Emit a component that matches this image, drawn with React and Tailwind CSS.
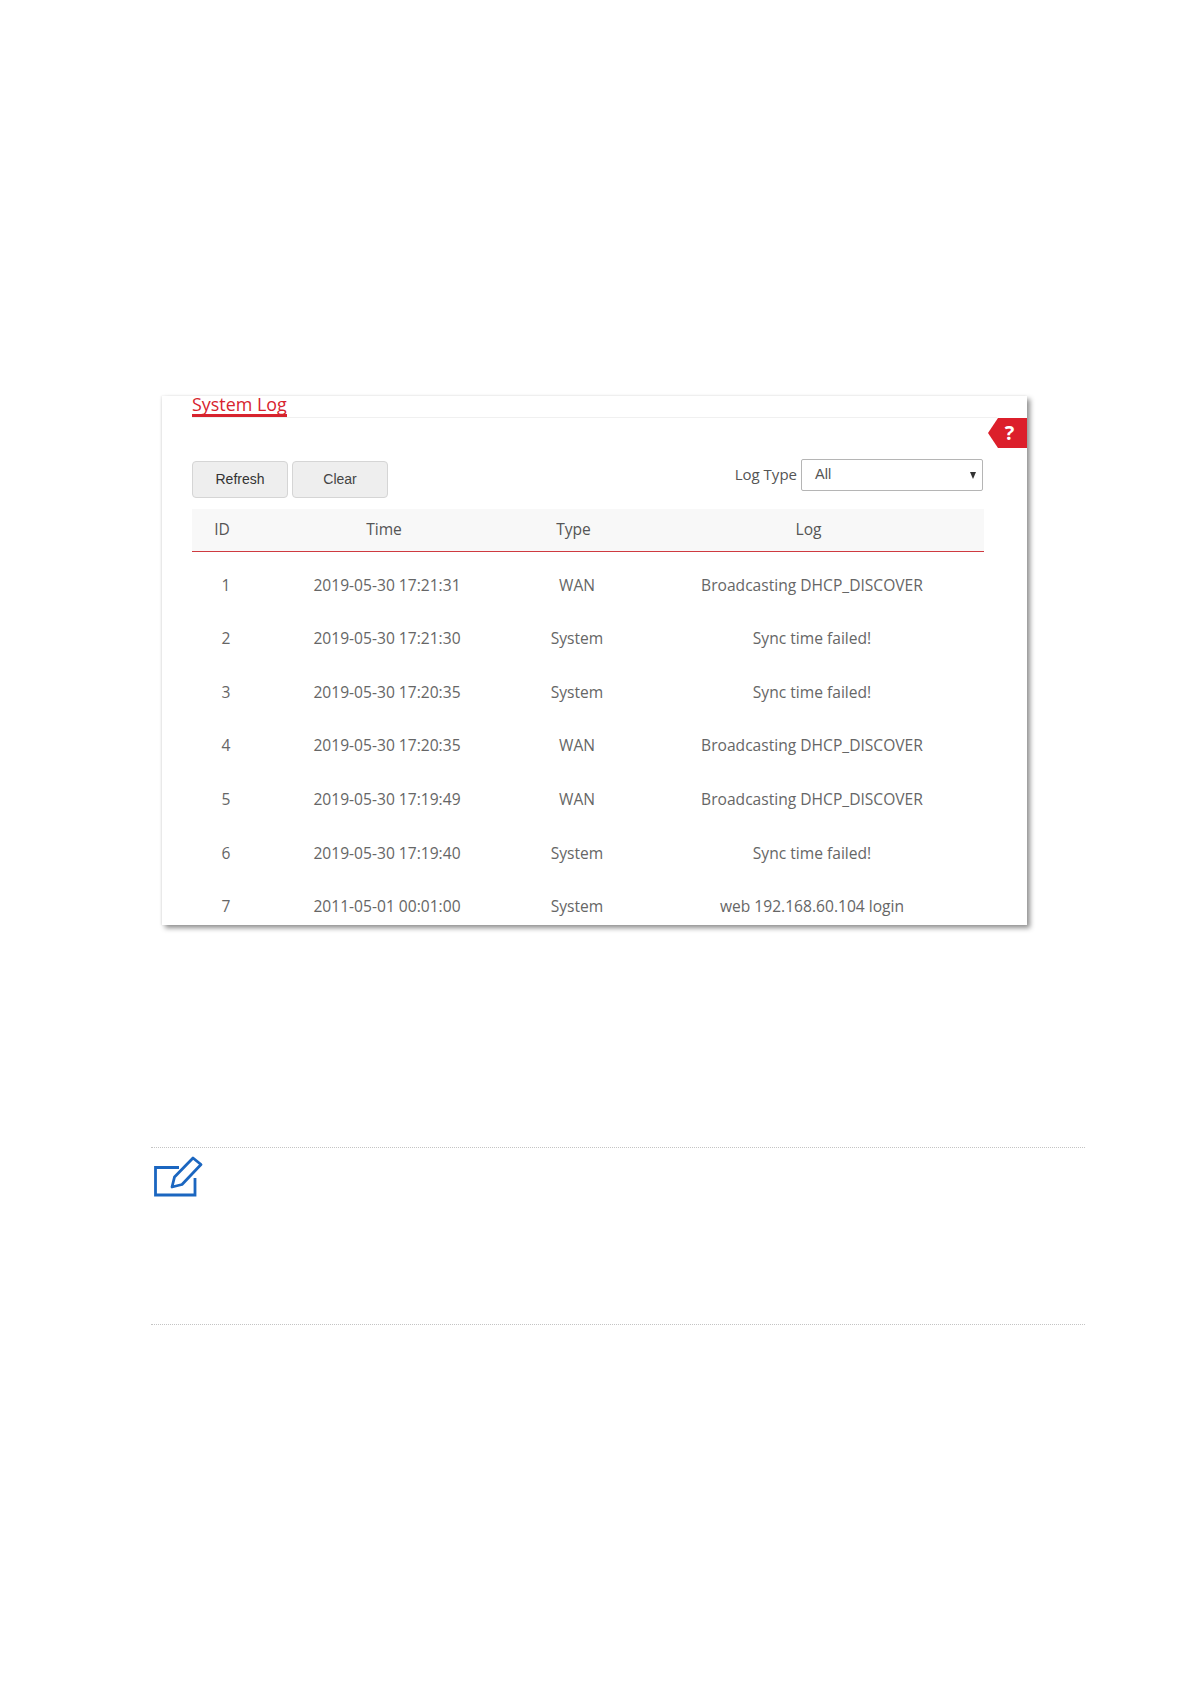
const rows = [
  [1, '2019-05-30 17:21:31', 'WAN', 'Broadcasting DHCP_DISCOVER'],
  [2, '2019-05-30 17:21:30', 'System', 'Sync time failed!'],
  [3, '2019-05-30 17:20:35', 'System', 'Sync time failed!'],
  [4, '2019-05-30 17:20:35', 'WAN', 'Broadcasting DHCP_DISCOVER'],
  [5, '2019-05-30 17:19:49', 'WAN', 'Broadcasting DHCP_DISCOVER'],
  [6, '2019-05-30 17:19:40', 'System', 'Sync time failed!'],
  [7, '2011-05-01 00:01:00', 'System', 'web 192.168.60.104 login'],
];

const cols = 'grid grid-cols-[68px_254px_126px_344px] text-center';

const NoteIcon = () => (
  <svg width="50" height="42" viewBox="0 0 50 42" fill="none" stroke="#1b66c0" strokeWidth="2.8">
    <path d="M25 11.5H1.5V39H41V22" />
    <path d="M39 2L47 8.5L28 28.5L18 31L20.5 21Z" strokeLinejoin="round" />
  </svg>
);

export default function App() {
  return (
    <div className="min-h-[1684px] bg-white pt-[396px] font-['Open_Sans',sans-serif] text-[15.6px] text-[#666]">
      <div className="relative ml-[162px] h-[529px] w-[865px] bg-white shadow-[3px_3px_5px_#8f8f8f,-1px_0_2px_#ececec]">
        <div className="mx-[30px] flex border-b border-[#f0f0f0]">
          <div className="border-b-[3px] border-[#d7232e] pb-[2px] text-[17.9px] leading-[16px] text-[#d7232e]">System Log</div>
        </div>
        <div className="absolute right-0 top-[22px] flex h-[30px] w-[39px] items-center justify-center bg-[#dc1f2b] pl-[4px] font-['Open_Sans',sans-serif] text-[20px] font-bold text-white [clip-path:polygon(0_50%,10px_0,100%_0,100%_100%,10px_100%)]">
          ?
        </div>
        <div className="ml-[30px] mt-[42px] flex w-[792px] items-start justify-between">
          <div className="mt-[1px] flex gap-[4px] font-['Liberation_Sans',sans-serif] text-[14px]">
            <button className="h-[37px] w-[96px] rounded-[4px] border border-[#d5d5d5] bg-[#eeeeee] text-[#333]">Refresh</button>
            <button className="h-[37px] w-[96px] rounded-[4px] border border-[#d5d5d5] bg-[#eeeeee] text-[#444]">Clear</button>
          </div>
          <div className="mr-[1px] mt-[-1px] flex items-center gap-[4px]">
            <span className="mt-[-2px] text-[15px] text-[#555]">Log Type</span>
            <div className="flex h-[32px] w-[182px] items-center justify-between rounded-[2px] border border-[#b5b5b5] pl-[13px] pr-[6px] font-['Liberation_Sans',sans-serif] text-[14.5px] text-[#555]">
              <span>All</span>
              <span className="h-0 w-0 border-x-[3.5px] border-t-[7px] border-x-transparent border-t-[#333]" />
            </div>
          </div>
        </div>
        <div className={`${cols} ml-[30px] mt-[11px] h-[43px] w-[792px] items-center border-b border-[#cf3a40] bg-[#f8f8f8] text-[#555]`}>
          <div className="pr-[8px]">ID</div>
          <div className="pr-[6px]">Time</div>
          <div className="pr-[7px]">Type</div>
          <div className="pr-[7px]">Log</div>
        </div>
        <div className="ml-[30px] mt-[6.5px] w-[792px]">
          {rows.map((r) => (
            <div key={r[0]} className={`${cols} h-[53.6px] items-center`}>
              <div>{r[0]}</div>
              <div>{r[1]}</div>
              <div>{r[2]}</div>
              <div>{r[3]}</div>
            </div>
          ))}
        </div>
      </div>
      <div className="ml-[151px] mt-[222px] h-[178px] w-[934px] border-y border-dotted border-[#c4c4c4] pl-[3px] pt-[8px]">
        <NoteIcon />
      </div>
    </div>
  );
}
